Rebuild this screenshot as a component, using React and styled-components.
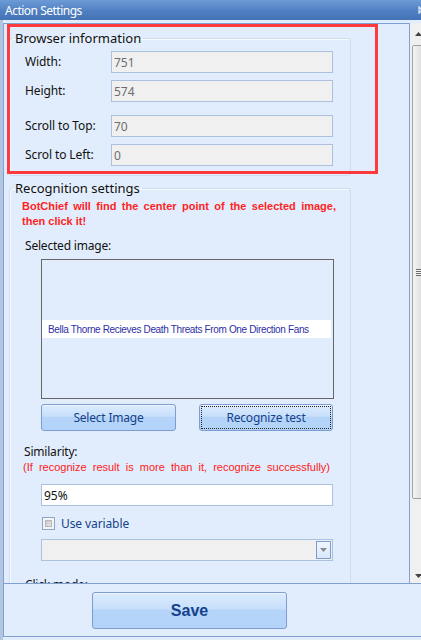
import React from 'react';
import styled, { createGlobalStyle } from 'styled-components';

const GlobalStyle = createGlobalStyle`
	html, body {
		margin: 0;
		padding: 0;
		background: #e1edfc;
	}
	body {
		font-family: 'Noto Sans', 'Open Sans', sans-serif;
		font-size: 12px;
		overflow: hidden;
	}
`;

const blue = '#15428b';

const Window = styled.div`
	position: relative;
	width: 421px;
	height: 640px;
	overflow: hidden;
	display: flex;
	flex-direction: column;
	background: #e1edfc;
`;

const TitleBar = styled.div`
	height: 20px;
	flex: none;
	display: flex;
	align-items: center;
	justify-content: space-between;
	padding-left: 5px;
	background: linear-gradient(#6d9bd6, #4f80c2 55%, #4473b6);
	color: #fff;
	font-size: 12px;
	letter-spacing: -0.5px;
	overflow: hidden;
`;

const Pin = styled.svg`
	flex: none;
	margin-right: -6px;
`;

const Main = styled.div`
	flex: 1;
	display: flex;
	flex-direction: column;
	border-left: 3px solid #b4c6df;
	padding-top: 3px;
	min-height: 0;
`;

const Body = styled.div`
	height: 560px;
	flex: none;
	display: flex;
`;

const ScrollArea = styled.div`
	width: 405px;
	flex: none;
	border: 1px solid #7ea0d2;
	border-bottom: none;
	overflow: hidden;
	background: #e1edfc;
`;

const ScrollBar = styled.div`
	width: 17px;
	flex: none;
	display: flex;
	flex-direction: column;
	background: #f0f0f0;
`;

const ArrowBox = styled.div`
	height: ${(p) => p.$h}px;
	flex: none;
	display: flex;
	align-items: ${(p) => p.$align || 'center'};
	justify-content: center;
	padding-bottom: ${(p) => p.$pb || 0}px;
	box-sizing: border-box;
`;

const Thumb = styled.div`
	height: ${(p) => p.$h}px;
	flex: none;
	margin: 0 1px 0 2px;
	border: 1px solid #a0a0a0;
	border-radius: 2px;
	background: linear-gradient(90deg, #f4f4f4, #e2e2e2 60%, #d4d4d4);
	display: flex;
	align-items: center;
	justify-content: center;
`;

const Grip = styled.div`
	width: 7px;
	height: 7px;
	background: repeating-linear-gradient(#6b6b6b 0 1px, #f4f4f4 1px 2px);
`;

const Group = styled.fieldset`
	margin: ${(p) => p.$top}px 0 0 5px;
	width: 342px;
	border: 1px solid #cfdcee;
	border-radius: 3px;
	box-shadow: inset 1px 1px 0 #f7faff;
	padding: 0;
	box-sizing: border-box;
	min-width: 0;
`;

const Legend = styled.legend`
	padding: 0 2px;
	margin-left: 3px;
	font-size: 13px;
	line-height: 16px;
	color: #111;
`;

const GroupBody = styled.div`
	padding: ${(p) => p.$pad};
`;

const FieldRow = styled.div`
	display: grid;
	grid-template-columns: 86px 222px;
	align-items: center;
	margin-top: ${(p) => p.$gap}px;
`;

const Label = styled.span`
	color: #111;
	font-size: 12px;
	line-height: 16px;
	letter-spacing: -0.1px;
`;

const TextBox = styled.div`
	height: 22px;
	box-sizing: border-box;
	border: 1px solid #abc1de;
	background: ${(p) => (p.$white ? '#fff' : '#f0f0f0')};
	color: ${(p) => (p.$white ? '#111' : '#6d6d6d')};
	display: flex;
	align-items: center;
	padding-left: 2px;
	font-size: 12px;
	width: ${(p) => p.$w || 222}px;
	margin-left: ${(p) => p.$ml || 0}px;
	margin-top: ${(p) => p.$mt || 0}px;
	position: relative;
`;

const Warning = styled.div`
	width: 314px;
	font-family: 'Liberation Sans', Arial, sans-serif;
	font-weight: bold;
	font-size: 11px;
	line-height: 15px;
	color: #ff1f1f;
	text-align: justify;
`;

const Hint = styled.div`
	width: 307px;
	margin-left: 1px;
	font-family: 'Liberation Sans', Arial, sans-serif;
	font-size: 11px;
	line-height: 15px;
	color: #ff2020;
	text-align: justify;
	text-align-last: justify;
	white-space: nowrap;
`;

const Caption = styled.div`
	margin: ${(p) => p.$mt}px 0 0 ${(p) => p.$ml}px;
	color: #111;
	font-size: 12px;
	line-height: 16px;
	letter-spacing: -0.2px;
`;

const ImageBox = styled.div`
	margin: 5px 0 0 19px;
	width: 293px;
	height: 140px;
	box-sizing: border-box;
	border: 1px solid #666;
	display: flex;
	align-items: center;
`;

const ImageStrip = styled.div`
	width: 289px;
	height: 18px;
	background: #fff;
	display: flex;
	align-items: center;
	padding-left: 6px;
	box-sizing: border-box;
	font-family: 'Liberation Sans', Arial, sans-serif;
	font-size: 10px;
	letter-spacing: -0.35px;
	color: #2e2ea6;
	white-space: nowrap;
`;

const ButtonRow = styled.div`
	display: flex;
	gap: 23px;
	margin: 5px 0 0 19px;
`;

const Button = styled.button`
	width: ${(p) => p.$w}px;
	height: ${(p) => p.$h}px;
	border: 1px solid #7d9dd0;
	border-radius: 3px;
	background: linear-gradient(#dcebfd, #c7dffb 45%, #b5d4fa 50%, #b3d3f9);
	color: ${blue};
	font-family: ${(p) => (p.$bold ? "'Liberation Sans', Arial, sans-serif" : "'Noto Sans', sans-serif")};
	font-size: ${(p) => (p.$bold ? 16 : 12)}px;
	font-weight: ${(p) => (p.$bold ? 'bold' : 'normal')};
	letter-spacing: ${(p) => (p.$bold ? 0 : -0.2)}px;
	padding: 0;
	outline: ${(p) => (p.$focus ? '1px dotted #222' : 'none')};
	outline-offset: -3px;
	box-shadow: inset 0 1px 0 #eef5ff;
	cursor: default;
`;

const CheckRow = styled.div`
	display: flex;
	align-items: center;
	gap: 6px;
	margin: 9px 0 0 20px;
	height: 16px;
`;

const Check = styled.div`
	width: 13px;
	height: 13px;
	box-sizing: border-box;
	border: 1px solid #8ea6c8;
	background: #f4f4f4;
	display: flex;
	align-items: center;
	justify-content: center;
	&::after {
		content: '';
		width: 7px;
		height: 7px;
		background: linear-gradient(135deg, #c9c9c9, #e4e4e4);
		border: 1px solid #b8b8b8;
		box-sizing: border-box;
	}
`;

const CheckLabel = styled.span`
	color: ${blue};
	font-size: 12px;
	letter-spacing: -0.1px;
`;

const DropButton = styled.div`
	position: absolute;
	right: 1px;
	top: 1px;
	width: 15px;
	height: 18px;
	box-sizing: border-box;
	border: 1px solid #7d9dd0;
	background: linear-gradient(#f0f6ff, #d9e8fb);
	display: flex;
	align-items: center;
	justify-content: center;
`;

const Footer = styled.div`
	flex: 1;
	border-top: 1px solid #7ea0d2;
	border-left: 1px solid #7ea0d2;
	border-bottom: 1px solid #7ea0d2;
	margin-bottom: 3px;
	padding: 8px 0 0 88px;
	background: #e1edfc;
`;

const Annotation = styled.div`
	position: absolute;
	left: 7px;
	top: 24px;
	width: 371px;
	height: 150px;
	box-sizing: border-box;
	border: 3px solid #ff3a3a;
	pointer-events: none;
`;

const browserFields = [
	{ label: 'Width:', value: '751', gap: 0 },
	{ label: 'Height:', value: '574', gap: 7 },
	{ label: 'Scroll to Top:', value: '70', gap: 13 },
	{ label: 'Scrol to Left:', value: '0', gap: 7 },
];

export default function App() {
	return (
		<Window>
			<GlobalStyle />
			<TitleBar>
				<span>Action Settings</span>
				<Pin width="10" height="10" viewBox="0 0 10 10">
					<path d="M2 1v8M2 3h6v4H2M4 3v4" stroke="#fff" strokeWidth="1" fill="none" />
				</Pin>
			</TitleBar>
			<Main>
				<Body>
					<ScrollArea>
						<Group $top={6}>
							<Legend>Browser information</Legend>
							<GroupBody $pad="5px 0 9px 15px">
								{browserFields.map((f) => (
									<FieldRow key={f.label} $gap={f.gap}>
										<Label>{f.label}</Label>
										<TextBox>{f.value}</TextBox>
									</FieldRow>
								))}
							</GroupBody>
						</Group>
						<Group $top={4}>
							<Legend>Recognition settings</Legend>
							<GroupBody $pad="3px 0 20px 12px">
								<Warning>
									BotChief will find the center point of the selected image, then click it!
								</Warning>
								<Caption $mt={9} $ml={3}>Selected image:</Caption>
								<ImageBox>
									<ImageStrip>Bella Thorne Recieves Death Threats From One Direction Fans</ImageStrip>
								</ImageBox>
								<ButtonRow>
									<Button $w={135} $h={27}>Select Image</Button>
									<Button $w={134} $h={27} $focus>Recognize test</Button>
								</ButtonRow>
								<Caption $mt={13} $ml={2}>Similarity:</Caption>
								<Hint>(If recognize result is more than it, recognize successfully)</Hint>
								<TextBox $white $w={292} $ml={19} $mt={9}>95%</TextBox>
								<CheckRow>
									<Check />
									<CheckLabel>Use variable</CheckLabel>
								</CheckRow>
								<TextBox $w={292} $ml={19} $mt={8}>
									<DropButton>
										<svg width="7" height="4" viewBox="0 0 7 4">
											<path d="M0 0h7L3.5 4z" fill="#8a8a8a" />
										</svg>
									</DropButton>
								</TextBox>
								<Caption $mt={16} $ml={3}>Click mode:</Caption>
							</GroupBody>
						</Group>
					</ScrollArea>
					<ScrollBar>
						<ArrowBox $h={22}>
							<svg width="7" height="4" viewBox="0 0 7 4">
								<path d="M0 4h7L3.5 0z" fill="#444" />
							</svg>
						</ArrowBox>
						<Thumb $h={452}>
							<Grip />
						</Thumb>
						<ArrowBox $h={86} $align="flex-end" $pb={7}>
							<svg width="7" height="4" viewBox="0 0 7 4">
								<path d="M0 0h7L3.5 4z" fill="#444" />
							</svg>
						</ArrowBox>
					</ScrollBar>
				</Body>
				<Footer>
					<Button $w={195} $h={37} $bold>Save</Button>
				</Footer>
			</Main>
			<Annotation />
		</Window>
	);
}
